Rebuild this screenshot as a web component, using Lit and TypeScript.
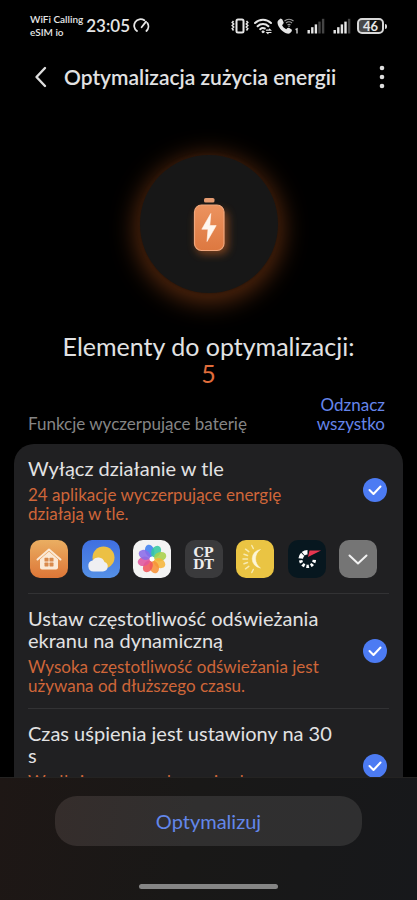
import { LitElement, html, css, svg, TemplateResult } from "lit";
import { customElement, property, state } from "lit/decorators.js";

interface AppEntry {
  name: string;
  tone: string;
  art: TemplateResult;
}

interface Issue {
  id: string;
  title: string;
  detail: string;
  apps?: AppEntry[];
}

const petals = ["#3f7ff0", "#35c9a0", "#a8d04a", "#f6b53a", "#f79235", "#f0565a", "#e0559c", "#8a6be8"];

const homeArt = svg`
  <path d="M7.500 19.500 19 9.500 30.500 19.500" fill="none" stroke="#fbe9d6" stroke-width="2" stroke-linecap="round" stroke-linejoin="round"/>
  <path d="M10 19.300 19 11.600 28 19.300V27.500a2 2 0 0 1-2 2h-14a2 2 0 0 1-2-2z" fill="#fbe9d6"/>
  <g fill="#d98a4c"><rect x="14.500" y="17.800" width="4" height="3.800" rx=".6"/><rect x="19.500" y="17.800" width="4" height="3.800" rx=".6"/>
  <rect x="14.500" y="22.600" width="4" height="3.800" rx=".6"/><rect x="19.500" y="22.600" width="4" height="3.800" rx=".6"/></g>`;

const weatherArt = svg`
  <circle cx="21.500" cy="17.500" r="11" fill="#ecc044"/>
  <path d="M11.500 31.500a5.600 5.600 0 0 1-1-11 6.800 6.800 0 0 1 12 1.500A4.900 4.900 0 0 1 21 31.500z" fill="#efeff2"/>`;

const photosArt = svg`
  ${petals.map(
    (c, i) => svg`<ellipse cx="19" cy="10.500" rx="4.600" ry="6.200" fill=${c} fill-opacity=".88" transform="rotate(${i * 45 - 16} 19 19)"/>`
  )}
  <circle cx="19" cy="19" r="2.200" fill="#fff"/>`;

const sunMoonArt = svg`
  <path d="M24.500 9.500A9.300 9.300 0 0 0 24.500 28 11.100 11.100 0 0 1 24.500 9.500z" fill="#fdf6d8" stroke="#fdf6d8" stroke-width=".5"/>
  <g stroke="#f7eab0" stroke-width="1.500" stroke-linecap="round">
    <path d="M17.300 8.500 15.800 5.500M12.800 11.600 9.500 9.200M11.500 15.500 8 14.300M11.500 19H7M11.500 22.500 8 23.700M12.800 26.400 9.500 28.800M17.300 29.500 15.800 32.500"/>
  </g>`;

const gaugeArt = svg`
  <path d="M19.500 12.300a6.800 6.800 0 0 0-6.800 6.800" fill="none" stroke="#fff" stroke-width="4.600" stroke-dasharray="4.600 .7"/>
  <path d="M12.700 20.300a6.800 6.800 0 0 0 13.600-1.500" fill="none" stroke="#fff" stroke-width="3.400" stroke-dasharray="2.600 1.800"/>
  <path d="M20 17 21.500 10.500H33z" fill="#e8364f"/>`;

const apps: AppEntry[] = [
  { name: "Dom", tone: "orange", art: html`<svg viewBox="0 0 38 38" aria-hidden="true">${homeArt}</svg>` },
  { name: "Pogoda", tone: "blue", art: html`<svg viewBox="0 0 38 38" aria-hidden="true">${weatherArt}</svg>` },
  { name: "Galeria", tone: "white", art: html`<svg viewBox="0 0 38 38" aria-hidden="true">${photosArt}</svg>` },
  { name: "CPDT", tone: "grey", art: html`<span class="mono">CP<br />DT</span>` },
  { name: "Jasność", tone: "yellow", art: html`<svg viewBox="0 0 38 38" aria-hidden="true">${sunMoonArt}</svg>` },
  { name: "Speedtest", tone: "navy", art: html`<svg viewBox="0 0 38 38" aria-hidden="true">${gaugeArt}</svg>` },
];

const issues: Issue[] = [
  {
    id: "background",
    title: "Wyłącz działanie w tle",
    detail: "24 aplikacje wyczerpujące energię działają w tle.",
    apps,
  },
  {
    id: "refresh",
    title: "Ustaw częstotliwość odświeżania ekranu na dynamiczną",
    detail: "Wysoka częstotliwość odświeżania jest używana od dłuższego czasu.",
  },
  {
    id: "sleep",
    title: "Czas uśpienia jest ustawiony na 30 s",
    detail: "Wydłużony czas włączenia ekranu",
  },
];

@customElement("status-bar")
export class StatusBar extends LitElement {
  static styles = css`
    :host {
      display: flex;
      align-items: center;
      justify-content: space-between;
      height: 52px;
      padding: 0 30px;
      color: #e6e6e6;
    }
    .side {
      display: flex;
      align-items: center;
      gap: 3px;
    }
    .carrier {
      font-size: 10px;
      line-height: 13px;
      font-weight: 600;
    }
    .clock {
      font-size: 17px;
      line-height: 24px;
      font-weight: 600;
    }
    .icons {
      gap: 5px;
    }
    svg {
      display: block;
    }
    .battery {
      display: flex;
      align-items: center;
      gap: 1px;
    }
    .level {
      box-sizing: border-box;
      width: 27px;
      height: 16px;
      border: 2px solid #d8d8d8;
      border-radius: 5px;
      background: linear-gradient(90deg, #4a4a4a 46%, #111 46%);
      font-size: 13px;
      line-height: 12px;
      font-weight: 700;
      text-align: center;
    }
    .tip {
      width: 2px;
      height: 5px;
      border-radius: 0 2px 2px 0;
      background: #d8d8d8;
    }
  `;

  private bars(lit: number) {
    return html`<svg width="21" height="18" viewBox="0 0 21 18" aria-hidden="true">
      ${[0, 1, 2, 3, 4].map(
        (i) => svg`<rect x=${2.5 + i * 3.6} y=${13 - i * 2.8} width="2.400" height=${3.5 + i * 2.8}
          fill=${i < lit ? "#e6e6e6" : "#444"}/>`
      )}
    </svg>`;
  }

  render() {
    return html`
      <div class="side">
        <div class="carrier">WiFi Calling<br />eSIM io</div>
        <div class="clock">23:05</div>
        <svg width="18" height="18" viewBox="0 0 18 18" fill="none" stroke="#e6e6e6" stroke-width="1.800" stroke-linecap="round" aria-hidden="true">
          <path d="M4 14A6.300 6.300 0 0 1 11.300 3.300M14.400 6A6.300 6.300 0 0 1 13.400 14M8.600 10.200 13 4.600"/>
        </svg>
      </div>
      <div class="side icons">
        <svg width="18" height="18" viewBox="0 0 18 18" fill="none" stroke="#e6e6e6" aria-hidden="true">
          <rect x="5.500" y="2.500" width="7" height="13" rx="1.500" stroke-width="2"/>
          <path stroke-width="1.500" d="M2.500 4 1.200 5.500 2.700 7 1.200 8.500 2.700 10 1.200 11.500 2.500 13.500M15.500 4l1.300 1.500L15.300 7 16.800 8.500 15.300 10 16.800 11.500l-1.300 2"/>
        </svg>
        <svg width="18" height="18" viewBox="0 0 18 18" fill="none" stroke="#e6e6e6" stroke-width="2" stroke-linecap="round" aria-hidden="true">
          <path d="M1 6a11.500 11.500 0 0 1 16 0M3.600 9.200a7.700 7.700 0 0 1 10.800 0M6.200 12.200a4.200 4.200 0 0 1 4.600-.7"/>
          <circle cx="9" cy="14.800" r="1" fill="#e6e6e6" stroke-width="1"/>
          <path stroke-width="1.200" d="M12.500 13.200h4l-1-1M17 15.500h-4l1 1"/>
        </svg>
        <svg width="23" height="18" viewBox="0 0 23 18" aria-hidden="true">
          <path fill="#e6e6e6" d="M1.400 3.200 3.600 1.600 5.200 2.200 6.700 5.600 6.100 7.200 5 8.100C5.800 9.900 7.200 11.300 9.200 12.200L10.400 11 11.900 10.700 14.700 12.500 14.900 13.900 13.200 16.100C11.700 17.300 9.400 16.900 6.800 15.100 3.300 12.800.2 8.300.5 4.800z"/>
          <g fill="none" stroke="#9a9a9a" stroke-width="1.100"><path d="M7.500 4a7 7 0 0 1 9 0M9 6a4.800 4.800 0 0 1 6 0M10.500 8a2.500 2.500 0 0 1 3 0"/></g>
          <path d="M12 8.800v.9" stroke="#bbb" stroke-width="1.300"/>
          <path d="M18.500 12.600 20 11.800V16.500" fill="none" stroke="#d0d0d0" stroke-width="1.400"/>
        </svg>
        ${this.bars(3)} ${this.bars(4)}
        <div class="battery"><div class="level">46</div><div class="tip"></div></div>
      </div>
    `;
  }
}

@customElement("issue-row")
export class IssueRow extends LitElement {
  @property({ attribute: false }) issue!: Issue;
  @property({ type: Boolean }) checked = false;

  static styles = css`
    :host {
      display: block;
      margin: 0 14px;
      border-bottom: 1px solid #323234;
    }
    :host(:last-child) {
      border-bottom: 0;
    }
    .line {
      display: flex;
      align-items: center;
      justify-content: space-between;
      padding: 13px 2px 13px 0;
    }
    .copy {
      width: 308px;
      flex-shrink: 1;
    }
    .title {
      display: block;
      margin-bottom: 6px;
      color: #e2e2e3;
      font-size: 20px;
      line-height: 22px;
    }
    .detail {
      display: block;
      min-height: 38px;
      color: #cf6639;
      font-size: 17px;
      line-height: 19px;
    }
    .check {
      display: grid;
      flex: none;
      width: 24px;
      height: 24px;
      place-items: center;
    }
    .check > * {
      grid-area: 1 / 1;
    }
    input {
      appearance: none;
      width: 24px;
      height: 24px;
      margin: 0;
      border: 2px solid #77777a;
      border-radius: 50%;
    }
    input:checked {
      border: 0;
      background: #4c7bf3;
    }
    .check svg {
      pointer-events: none;
    }
    .apps {
      display: flex;
      justify-content: space-between;
      margin: 0;
      padding: 4px 12px 15px 2px;
      list-style: none;
    }
    .tile {
      display: grid;
      place-items: center;
      box-sizing: border-box;
      width: 38px;
      height: 38px;
      padding: 0;
      border: 0;
      border-radius: 10px;
      overflow: hidden;
    }
    .orange { background: linear-gradient(#eaae62, #dd7637); }
    .blue { background: linear-gradient(#3f6fe0, #5590e6); }
    .white { background: #f3f3f3; }
    .grey { background: #3a3a3c; }
    .yellow { background: #eac443; }
    .navy { background: #07171f; }
    .more { background: #757575; }
    .tile svg {
      width: 38px;
      height: 38px;
    }
    .mono {
      color: #ececec;
      font: 700 13px/12px "DejaVu Serif", serif;
      text-align: center;
    }
  `;

  render() {
    const { id, title, detail, apps: list } = this.issue;
    return html`
      <div class="line">
        <label class="copy" for=${id}>
          <span class="title">${title}</span>
          <span class="detail">${detail}</span>
        </label>
        <span class="check">
          <input type="checkbox" id=${id} .checked=${this.checked}
            @change=${(e: Event) =>
              this.dispatchEvent(new CustomEvent("toggle-issue", { detail: (e.target as HTMLInputElement).checked }))} />
          ${this.checked
            ? html`<svg width="24" height="24" viewBox="0 0 24 24" aria-hidden="true">
                <path d="M6.500 12 10.500 16 17.500 8.500" fill="none" stroke="#fff" stroke-width="2" stroke-linecap="round" stroke-linejoin="round"/>
              </svg>`
            : ""}
        </span>
      </div>
      ${list
        ? html`<ul class="apps">
            ${list.map((a) => html`<li class="tile ${a.tone}" aria-label=${a.name}>${a.art}</li>`)}
            <li>
              <button class="tile more" aria-label="Rozwiń">
                <svg viewBox="0 0 38 38" aria-hidden="true">
                  <path d="M10.500 15.500 19 23.500 27.500 15.500" fill="none" stroke="#f2f2f2" stroke-width="2" stroke-linecap="round" stroke-linejoin="round"/>
                </svg>
              </button>
            </li>
          </ul>`
        : ""}
    `;
  }
}

@customElement("app-root")
export class AppRoot extends LitElement {
  @state() private selected = new Set(issues.map((i) => i.id));

  static styles = css`
    :host {
      display: flex;
      flex-direction: column;
      height: 100vh;
      overflow: hidden;
      background: #000;
      color: #e2e2e3;
      font-family: Lato, "Noto Sans", sans-serif;
    }
    button {
      border: 0;
      padding: 0;
      background: none;
      color: inherit;
      font-family: inherit;
    }
    header {
      display: flex;
      align-items: center;
      height: 50px;
      padding: 0 24px 0 30px;
    }
    h1 {
      flex: 1;
      margin: 0 0 0 12px;
      font-size: 21px;
      line-height: 26px;
      font-weight: 600;
      white-space: nowrap;
    }
    .icon {
      display: grid;
      width: 22px;
      height: 26px;
      place-items: center;
    }
    main {
      flex: 1;
      min-height: 0;
      overflow-y: auto;
      scrollbar-width: none;
    }
    .hero {
      display: grid;
      place-items: center;
      width: 138px;
      height: 138px;
      margin: 53px auto 40px;
      border-radius: 50%;
      background: #171717;
      box-shadow: 0 0 3px 1px #2c1508, 0 5px 24px 5px #57290e;
    }
    h2 {
      margin: 0;
      font-size: 25px;
      line-height: 27px;
      font-weight: 400;
      text-align: center;
    }
    .count {
      display: block;
      color: #e06d3b;
    }
    .section {
      display: flex;
      align-items: flex-end;
      justify-content: space-between;
      margin: 8px 32px 11px 28px;
      font-size: 17px;
      line-height: 19px;
    }
    h3 {
      margin: 0;
      color: #858585;
      font-size: inherit;
      font-weight: 400;
    }
    .all {
      width: 80px;
      color: #6585ea;
      font-size: inherit;
      line-height: inherit;
      text-align: right;
    }
    .card {
      margin: 0 14px;
      border-radius: 20px;
      background: #202022;
    }
    footer {
      display: flex;
      flex-direction: column;
      align-items: center;
      justify-content: space-between;
      box-sizing: border-box;
      height: 123px;
      padding: 18px 55px 11px;
      border-top: 1px solid #242322;
      background: linear-gradient(100deg, #1e1715, #191817 45%, #17181b);
    }
    .primary {
      width: 100%;
      height: 50px;
      border-radius: 22px;
      background: linear-gradient(100deg, #352d2b, #302f2f 45%, #2f2f30);
      color: #6387ea;
      font-size: 20px;
    }
    .handle {
      width: 139px;
      height: 5px;
      border-radius: 3px;
      background: #858585;
    }
  `;

  private toggle(id: string, on: boolean) {
    const next = new Set(this.selected);
    if (on) next.add(id);
    else next.delete(id);
    this.selected = next;
  }

  render() {
    return html`
      <status-bar></status-bar>
      <header>
        <button class="icon" aria-label="Wstecz">
          <svg width="22" height="24" viewBox="0 0 22 24" aria-hidden="true">
            <path d="M15 3 6.500 12 15 21" fill="none" stroke="#dedede" stroke-width="2.400" stroke-linecap="round" stroke-linejoin="round"/>
          </svg>
        </button>
        <h1>Optymalizacja zużycia energii</h1>
        <button class="icon" aria-label="Więcej">
          <svg width="6" height="24" viewBox="0 0 6 24" fill="#dedede" aria-hidden="true">
            <circle cx="3" cy="3" r="2.300"/><circle cx="3" cy="12" r="2.300"/><circle cx="3" cy="21" r="2.300"/>
          </svg>
        </button>
      </header>
      <main>
        <div class="hero">
          <svg width="60" height="76" viewBox="0 0 60 76" aria-hidden="true">
            <defs>
              <linearGradient id="cell" x1="0" y1="0" x2="0" y2="1">
                <stop offset="0" stop-color="#ec935f"/><stop offset="1" stop-color="#dd7840"/>
              </linearGradient>
              <filter id="soft" x="-50%" y="-50%" width="200%" height="200%"><feGaussianBlur stdDeviation="4"/></filter>
            </defs>
            <rect x="17" y="24" width="32" height="44" rx="8" fill="#c05e24" opacity=".6" filter="url(#soft)"/>
            <rect x="25" y="12" width="10.500" height="4.500" rx="1.600" fill="#e39a70"/>
            <rect x="15.500" y="19" width="29.500" height="45.500" rx="7" fill="url(#cell)" stroke="#f0a67c" stroke-width="1.200"/>
            <path d="M31.800 27.500 22.800 43.200H29L28 55.500 37.200 39.600H30.800z" fill="#fff6ee" stroke="#fff6ee" stroke-width=".6" stroke-linejoin="round"/>
          </svg>
        </div>
        <h2>Elementy do optymalizacji: <span class="count">5</span></h2>
        <div class="section">
          <h3>Funkcje wyczerpujące baterię</h3>
          <button class="all" @click=${() => (this.selected = new Set())}>Odznacz wszystko</button>
        </div>
        <section class="card">
          ${issues.map(
            (i) => html`<issue-row .issue=${i} .checked=${this.selected.has(i.id)}
              @toggle-issue=${(e: CustomEvent<boolean>) => this.toggle(i.id, e.detail)}></issue-row>`
          )}
        </section>
      </main>
      <footer>
        <button class="primary">Optymalizuj</button>
        <div class="handle"></div>
      </footer>
    `;
  }
}
